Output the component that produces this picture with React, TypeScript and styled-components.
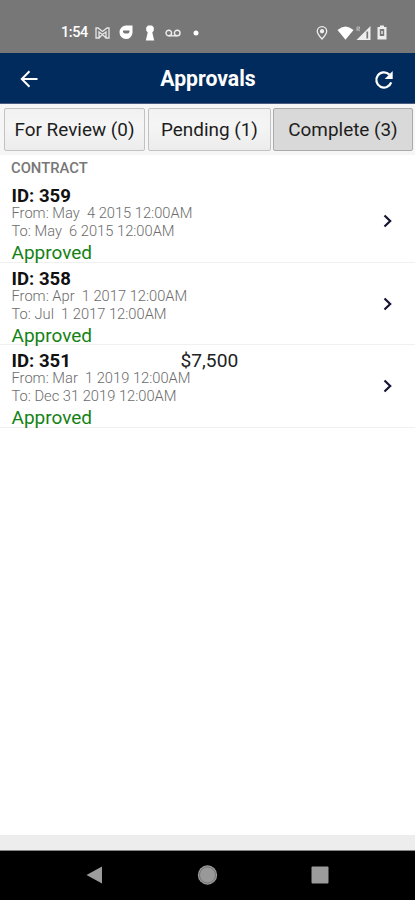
import React from "react";
import styled, { createGlobalStyle } from "styled-components";

const GlobalStyle = createGlobalStyle`
  * { box-sizing: border-box; }
  body { margin: 0; background: #fff; font-family: Roboto, sans-serif; }
`;

const Screen = styled.div`
  width: 415px;
  height: 900px;
  display: flex;
  flex-direction: column;
  background: #fff;
  overflow: hidden;
`;

const StatusBar = styled.div`
  height: 53px;
  flex: none;
  background: #777;
  color: #fff;
  display: flex;
  justify-content: space-between;
  padding: 11px 28px 0 61px;
`;

const StatusGroup = styled.div`
  display: flex;
  align-items: center;
  height: 43px;
`;

const Clock = styled.span`
  font-size: 14.5px;
  font-weight: 500;
  letter-spacing: -0.4px;
  width: 34px;
`;

const StatusIcon = styled.svg<{ $gap?: number }>`
  display: block;
  flex: none;
  margin-left: ${(p) => p.$gap ?? 0}px;
`;

const Header = styled.header`
  height: 51px;
  flex: none;
  background: #002b5c;
  border-bottom: 1px solid #4c5c80;
  color: #fff;
  display: grid;
  grid-template-columns: 57px 1fr 57px;
  align-items: center;
`;

const Title = styled.h1`
  margin: 0;
  padding: 1px 0 0 1px;
  text-align: center;
  font-size: 21.2px;
  line-height: 24px;
  font-weight: 700;
`;

const IconButton = styled.button`
  border: 0;
  background: none;
  padding: 1px 0 0;
  color: #fff;
  display: flex;
  justify-content: center;
`;

const RefreshButton = styled(IconButton)`
  padding: 3px 5px 0 0;
`;

const Tabs = styled.nav`
  height: 51px;
  flex: none;
  background: #f6f6f6;
  display: flex;
  padding: 4px 0 4px 4px;
`;

const Tab = styled.button<{ $width: number; $gap: number; $active?: boolean }>`
  width: ${(p) => p.$width}px;
  margin-right: ${(p) => p.$gap}px;
  flex: none;
  padding: 1px 0 0;
  border: 1px solid ${(p) => (p.$active ? "#aaa" : "#c2c2c2")};
  border-radius: 2px;
  background: ${(p) => (p.$active ? "#d9d9d9" : "linear-gradient(#f1f1f1, #f5f5f5 40%, #ececec)")};
  color: #1d1d1d;
  font: 400 18.9px/24px Roboto, sans-serif;
  white-space: nowrap;
`;

const SectionTitle = styled.h2`
  margin: 0;
  height: 25.4px;
  flex: none;
  padding: 1px 0 0 11px;
  color: #777;
  font-size: 14.8px;
  line-height: 25px;
  font-weight: 500;
`;

const Row = styled.div`
  height: 82.4px;
  flex: none;
  display: grid;
  grid-template-columns: 169px 1fr 46px;
  padding: 6px 0 0 11.5px;
  border-bottom: 1.5px solid #f0f0f0;
`;

const Details = styled.div`
  white-space: pre;
`;

const RowId = styled.div`
  font-size: 18.6px;
  line-height: 21px;
  font-weight: 700;
  color: #111;
`;

const DateLine = styled.div<{ $height: number }>`
  font-size: 14.7px;
  line-height: ${(p) => p.$height}px;
  color: #6c6c6c;
  font-weight: 300;
`;

const State = styled.div`
  font-size: 19px;
  line-height: 20px;
  color: #148214;
`;

const Amount = styled.div`
  font-size: 19.2px;
  line-height: 19px;
  color: #222;
`;

const Chevron = styled.svg`
  display: block;
  margin: 28px 0 0 14px;
`;

const Spacer = styled.div`
  flex: 1;
`;

const Footer = styled.div`
  height: 16px;
  flex: none;
  background: #ededed;
  border-bottom: 1px solid #858585;
`;

const NavBar = styled.div`
  height: 49px;
  flex: none;
  background: #000;
  display: flex;
  align-items: center;
  justify-content: space-between;
  padding: 0 86px 1px 85px;
`;

const rows = [
  { id: "359", from: "May  4 2015 12:00AM", to: "May  6 2015 12:00AM", amount: "" },
  { id: "358", from: "Apr  1 2017 12:00AM", to: "Jul  1 2017 12:00AM", amount: "" },
  { id: "351", from: "Mar  1 2019 12:00AM", to: "Dec 31 2019 12:00AM", amount: "$7,500" },
];

export default function App() {
  return (
    <>
      <GlobalStyle />
      <Screen>
        <StatusBar>
          <StatusGroup>
            <Clock>1:54</Clock>
            <StatusIcon width="15" height="12" viewBox="0 0 15 12" fill="none" stroke="#e6e6e6" strokeWidth="1.3">
              <path d="M1 1v10h3V5l3.500 2.500L11 5v6h3V1h-2L7.500 4.500 3 1zM4 11l3.500-3.500L11 11" />
            </StatusIcon>
            <StatusIcon $gap={9} width="14" height="15" viewBox="0 0 14 15">
              <path d="M7 .5H13.500V7.500A6.500 6.800 0 1 1 7 .5z" fill="#fff" />
              <path d="M4 5.500h6.500v1q0 2-2 2H6q-2 0-2-2z" fill="#777" />
            </StatusIcon>
            <StatusIcon $gap={12} width="10" height="16" viewBox="0 0 10 16" fill="#fff">
              <path d="M3 .5h4l1.800 2v3L7.300 7.500l1.900 8H.8l1.900-8L1.200 5.500v-3z" />
            </StatusIcon>
            <StatusIcon $gap={10} width="16" height="8" viewBox="0 0 16 8" fill="none" stroke="#eee" strokeWidth="1.400">
              <circle cx="3.800" cy="4" r="2.800" />
              <circle cx="12.200" cy="4" r="2.800" />
              <path d="M3.800 6.800h8.400" />
            </StatusIcon>
            <StatusIcon $gap={12} width="6" height="6" viewBox="0 0 6 6">
              <circle cx="3" cy="3" r="2.500" fill="#fff" />
            </StatusIcon>
          </StatusGroup>
          <StatusGroup>
            <StatusIcon width="12" height="14" viewBox="0 0 12 14" fill="none" stroke="#eee" strokeWidth="1.300">
              <path d="M6 13Q1.300 8 1.300 5.200a4.700 4.500 0 0 1 9.400 0Q10.700 8 6 13z" />
              <circle cx="6" cy="5.200" r="1.500" fill="#eee" />
            </StatusIcon>
            <StatusIcon $gap={9} width="17" height="14" viewBox="0 0 17 14" fill="#fff">
              <path d="M.5 4Q8.500-3 16.500 4L8.500 13.700z" />
            </StatusIcon>
            <StatusIcon $gap={2} width="15" height="14" viewBox="0 0 15 14">
              <path d="M14.500 0v14H.5z" fill="#eee" />
              <path d="M11.300 5.500v7" stroke="#777" strokeWidth="1.700" />
              <path d="M1 5V1h2.500v2H1l3 2" fill="none" stroke="#bbb" strokeWidth="1" />
            </StatusIcon>
            <StatusIcon $gap={6} width="10" height="15" viewBox="0 0 10 15">
              <path d="M3 .5h4V2h2.500v12.500h-9V2H3z" fill="#eee" />
              <path d="M2.800 4h4.400v7H2.800z" fill="#777" />
              <path d="M4.200 6h1.600v3H4.200z" fill="#ddd" />
            </StatusIcon>
          </StatusGroup>
        </StatusBar>
        <Header>
          <IconButton aria-label="Back">
            <svg width="18" height="18" viewBox="0 0 18 18" fill="none" stroke="currentColor" strokeWidth="2">
              <path d="M17.500 9H2M9.500 1.300L1.800 9l7.700 7.700" />
            </svg>
          </IconButton>
          <Title>Approvals</Title>
          <RefreshButton aria-label="Refresh">
            <svg width="20" height="20" viewBox="0 0 20 20">
              <path d="M17.200 12.300A7.600 7.600 0 1 1 15.400 4.600" fill="none" stroke="currentColor" strokeWidth="2.300" />
              <path d="M18.700 1v8h-8z" fill="currentColor" />
            </svg>
          </RefreshButton>
        </Header>
        <Tabs>
          <Tab $width={141} $gap={3}>For Review (0)</Tab>
          <Tab $width={123} $gap={2}>Pending (1)</Tab>
          <Tab $width={140} $gap={0} $active>Complete (3)</Tab>
        </Tabs>
        <SectionTitle>CONTRACT</SectionTitle>
        {rows.map((r) => (
          <Row key={r.id}>
            <Details>
              <RowId>ID: {r.id}</RowId>
              <DateLine $height={13}>From: {r.from}</DateLine>
              <DateLine $height={23}>To: {r.to}</DateLine>
              <State>Approved</State>
            </Details>
            <Amount>{r.amount}</Amount>
            <Chevron width="10" height="14" viewBox="0 0 10 14" fill="none" stroke="#151530" strokeWidth="2.200">
              <path d="M1.500 1.500L7.200 7l-5.700 5.500" />
            </Chevron>
          </Row>
        ))}
        <Spacer />
        <Footer />
        <NavBar>
          <svg width="18" height="18" viewBox="0 0 18 18">
            <path d="M17 .5v17L1.500 9z" fill="#9c9c9c" />
          </svg>
          <svg width="22" height="22" viewBox="0 0 22 22">
            <circle cx="11.500" cy="11" r="9.700" fill="#999" />
            <circle cx="11.500" cy="11" r="8" fill="none" stroke="#686868" strokeWidth=".8" />
          </svg>
          <svg width="18" height="18" viewBox="0 0 18 18">
            <rect x=".5" y=".5" width="17" height="17" rx="1" fill="#9c9c9c" />
          </svg>
        </NavBar>
      </Screen>
    </>
  );
}
